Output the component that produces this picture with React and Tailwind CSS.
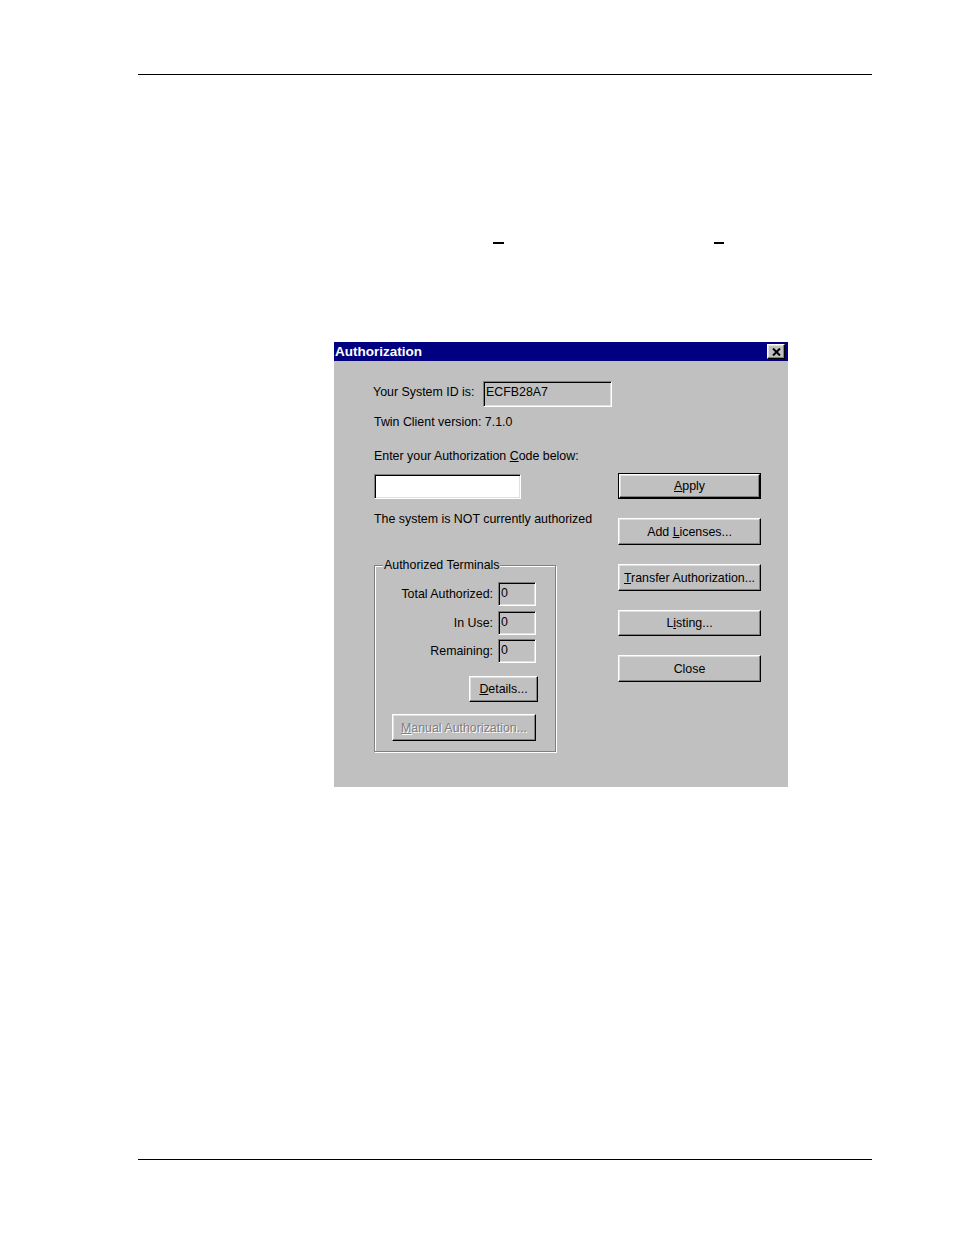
import React from "react"

// Win95-style bevels
const raised =
   "border border-t-white border-l-white border-r-black border-b-black shadow-[inset_-1px_-1px_0_#808080,inset_1px_1px_0_#dfdfdf]"
const sunken =
   "border border-t-[#808080] border-l-[#808080] border-r-white border-b-white shadow-[inset_1px_1px_0_#000,inset_-1px_-1px_0_#dfdfdf]"

function Button({ children, className = "", isDefault = false, disabled = false }) {
   return (
      <div className={isDefault ? "border border-black " + className : className}>
         <div
            className={`${raised} flex h-full w-full items-center justify-center bg-[#c0c0c0] ${
               disabled ? "text-[#808080] [text-shadow:1px_1px_0_#fff]" : "text-black"
            }`}
         >
            {children}
         </div>
      </div>
   )
}

function Field({ value, className = "", white = false }) {
   return (
      <div
         className={`${sunken} ${white ? "bg-white" : "bg-[#c0c0c0]"} flex items-start pl-[2px] pt-[2px] ${className}`}
      >
         {value}
      </div>
   )
}

function CountRow({ label, value }) {
   return (
      <div className="flex items-center justify-end gap-[5px]">
         <span>{label}</span>
         <Field value={value} className="h-[24px] w-[38px]" />
      </div>
   )
}

export default function App() {
   return (
      <div className="h-[1235px] w-[954px] overflow-hidden bg-white pt-[74px] font-['Liberation_Sans',Arial,sans-serif]">
         <div className="ml-[138px] h-px w-[734px] bg-black" />

         <div className="relative mt-[167px] h-[2px]">
            <div className="absolute left-[493px] h-[2px] w-[11px] bg-black" />
            <div className="absolute left-[714px] h-[2px] w-[10px] bg-black" />
         </div>

         {/* Authorization dialog */}
         <div className="ml-[334px] mt-[98px] flex h-[445px] w-[454px] flex-col bg-[#c0c0c0] text-[12.4px] leading-[16px] text-black">
            <div className="flex h-[19px] items-center justify-between bg-[#000080] pl-[1px] pr-[3px]">
               <span className="text-[13.5px] font-bold text-white">Authorization</span>
               <div className={`${raised} flex h-[15px] w-[18px] items-center justify-center bg-[#c0c0c0]`}>
                  <svg width="9" height="8" viewBox="0 0 9 8">
                     <path d="M1 0.5 L8 7.5 M8 0.5 L1 7.5" stroke="#000" strokeWidth="2" />
                  </svg>
               </div>
            </div>

            <div className="flex">
               {/* left column */}
               <div className="ml-[39px] flex w-[245px] flex-col">
                  <div className="mt-[20px] flex items-center">
                     <span className="w-[110px] -translate-y-[2px]">Your System ID is:</span>
                     <Field value="ECFB28A7" className="h-[26px] w-[129px]" />
                  </div>
                  <div className="ml-px mt-[7px]">Twin Client version: 7.1.0</div>
                  <div className="ml-px mt-[18px]">
                     Enter your Authorization <u>C</u>ode below:
                  </div>
                  <Field value="" white className="ml-px mt-[10px] h-[25px] w-[147px]" />
                  <div className="ml-px mt-[12px] whitespace-nowrap">
                     The system is NOT currently authorized
                  </div>

                  <div className="relative ml-px mt-[38px] h-[187px] w-[182px] border border-[#808080] shadow-[1px_1px_0_#fff,inset_1px_1px_0_#fff]">
                     <span className="absolute -top-[9px] left-[8px] bg-[#c0c0c0] px-[1px]">
                        Authorized Terminals
                     </span>
                     <div className="mr-[19px] mt-[16px] flex flex-col gap-[4.5px]">
                        <CountRow label="Total Authorized:" value="0" />
                        <CountRow label="In Use:" value="0" />
                        <CountRow label="Remaining:" value="0" />
                     </div>
                     <div className="mr-[17px] mt-[13px] flex justify-end">
                        <Button className="h-[26px] w-[69px]">
                           <span>
                              <u>D</u>etails...
                           </span>
                        </Button>
                     </div>
                     <Button disabled className="ml-[17px] mt-[12px] h-[27px] w-[144px]">
                        <span>
                           <u>M</u>anual Authorization...
                        </span>
                     </Button>
                  </div>
               </div>

               {/* right column */}
               <div className="mt-[112px] flex w-[143px] flex-col gap-[19px]">
                  <Button isDefault className="h-[26px] w-[143px]">
                     <span>
                        <u>A</u>pply
                     </span>
                  </Button>
                  <Button className="h-[27px] w-[143px]">
                     <span>
                        Add <u>L</u>icenses...
                     </span>
                  </Button>
                  <Button className="h-[27px] w-[143px]">
                     <span className="whitespace-nowrap">
                        <u>T</u>ransfer Authorization...
                     </span>
                  </Button>
                  <Button className="h-[26px] w-[143px]">
                     <span>
                        L<u>i</u>sting...
                     </span>
                  </Button>
                  <Button className="h-[27px] w-[143px]">
                     <span>Close</span>
                  </Button>
               </div>
            </div>
         </div>

         <div className="ml-[138px] mt-[372px] h-px w-[734px] bg-black" />
      </div>
   )
}
